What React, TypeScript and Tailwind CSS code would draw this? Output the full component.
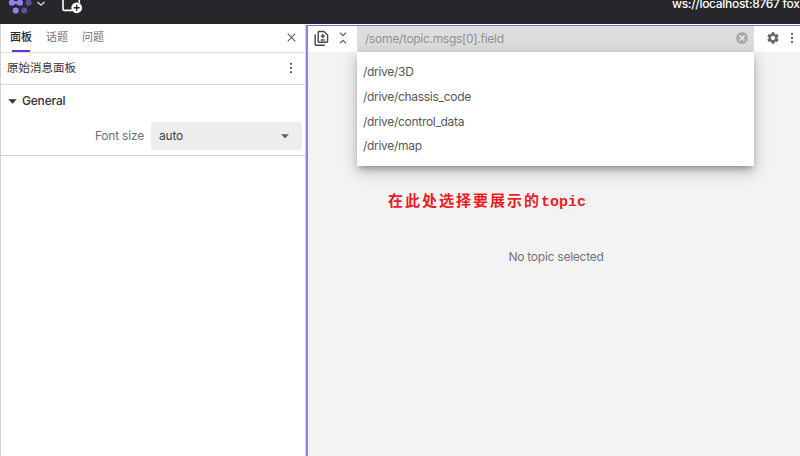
import React from "react";

const topics = ["/drive/3D", "/drive/chassis_code", "/drive/control_data", "/drive/map"];

function Dots() {
  return (
    <svg className="h-3 w-1 shrink-0" viewBox="0 0 4 12" fill="#5e5e63">
      <circle cx="2" cy="1.8" r="1.15" />
      <circle cx="2" cy="6" r="1.15" />
      <circle cx="2" cy="10.2" r="1.15" />
    </svg>
  );
}

function Header() {
  return (
    <header className="flex h-6 shrink-0 items-start bg-[#27272b] text-white">
      <svg className="h-6 w-[90px] shrink-0" viewBox="0 0 90 24" fill="none">
        <g fill="#9480f4">
          <rect x="11" y="1.2" width="10" height="3" />
          <circle cx="11.8" cy="2.7" r="3" />
          <circle cx="20" cy="2.7" r="3" />
          <circle cx="15.7" cy="10.4" r="3" />
        </g>
        <g fill="#5f4f9b">
          <circle cx="28.6" cy="2.7" r="3" />
          <circle cx="24.3" cy="10.4" r="3" />
        </g>
        <path d="M37.5 2 41 5.2 44.5 2" stroke="#d8d8dc" strokeWidth="1.3" />
        <path d="M63 0V9.2Q63 10.4 64.2 10.4H72M79.3 0V3" stroke="#fff" strokeWidth="1.6" />
        <circle cx="76.7" cy="7.8" r="5.4" fill="#fff" />
        <path d="M76.7 4.8v6M73.7 7.8h6" stroke="#27272b" strokeWidth="1.4" />
      </svg>
      <span className="-mt-[4px] ml-auto w-[128px] whitespace-nowrap text-[12px] leading-4 font-medium tracking-[-0.3px]">
        ws://localhost:8767 fox
      </span>
    </header>
  );
}

function Sidebar() {
  return (
    <aside className="flex w-[306px] shrink-0 flex-col border-x border-[#d4d4d8] bg-white">
      <nav className="flex h-[29px] shrink-0 items-stretch border-b border-[#dcdcdc] pr-[9px] pl-[9px] text-[11px] text-[#77737f]">
        <span className="relative flex w-9 items-center pb-px font-medium text-[#29292d]">
          面板
          <i className="absolute bottom-0 left-0.5 h-0.5 w-[18px] bg-[#6535d1]" />
        </span>
        <span className="flex w-9 items-center pb-px">话题</span>
        <span className="flex items-center pb-px">问题</span>
        <svg className="mt-[9px] ml-auto size-[9px]" viewBox="0 0 9 9" stroke="#626067" strokeWidth="1.15">
          <path d="m.7.7 7.6 7.6M8.3.7.7 8.3" />
        </svg>
      </nav>
      <div className="flex h-8 shrink-0 items-center justify-between border-b border-[#d8d8d8] pr-3 pl-[6px] text-[11.5px] text-[#36363a]">
        <span>原始消息面板</span>
        <span className="flex pb-px">
          <Dots />
        </span>
      </div>
      <section className="h-[71px] shrink-0 border-b border-[#d2d2d2]">
        <div className="flex h-8 items-center pl-[7px] text-[12px] font-medium tracking-[-0.2px] text-[#343438]">
          <svg className="mr-[5px] h-[5px] w-[9px]" viewBox="0 0 9 5" fill="#303034">
            <path d="M.3.3h8.4L4.5 4.7z" />
          </svg>
          General
        </div>
        <div className="mt-[5px] flex h-[28px] items-center justify-end pr-[3px] text-[12px] tracking-[-0.2px] text-[#716e7b]">
          <span className="mr-[7px] pb-px">Font size</span>
          <div className="flex h-full w-[151px] items-center justify-between rounded-[2px] bg-[#eeeeee] pr-[13px] pl-2 text-[#414146]">
            auto
            <svg className="h-[5px] w-2" viewBox="0 0 8 5" fill="#66666a">
              <path d="M0 .3h8L4 4.5z" />
            </svg>
          </div>
        </div>
      </section>
    </aside>
  );
}

function TopicInput() {
  return (
    <div className="relative flex h-full w-[397px] items-center justify-between bg-[#dddddd] pr-[6px] pl-2 text-[12px] tracking-[-0.3px] text-[#929292]">
      <span className="pb-px">/some/topic.msgs[0].field</span>
      <svg className="mb-0.5 size-3" viewBox="0 0 12 12">
        <circle cx="6" cy="6" r="6" fill="#aaaaaa" />
        <path d="m3.5 3.5 5 5m0-5-5 5" stroke="#eeeeee" strokeWidth="1.2" />
      </svg>
      <ul className="absolute top-full left-0 h-[114px] w-full bg-white pt-[8px] pl-[6px] text-[#57575a] shadow-[0_4px_6px_-2px_rgba(0,0,0,0.3),0_5px_14px_1px_rgba(0,0,0,0.22)]">
        {topics.map((t) => (
          <li key={t} className="flex h-[24.7px] items-center">{t}</li>
        ))}
      </ul>
    </div>
  );
}

function Panel() {
  return (
    <main className="mt-px flex min-w-0 flex-1 flex-col border-t border-l-2 border-t-[#8464d8] border-l-[#9b7bdd] bg-[#f3f3f3]">
      <div className="flex h-[26px] shrink-0 items-center bg-white">
        <svg className="mb-0.5 ml-1.5 h-[17px] w-[15px]" viewBox="0 0 15 17" fill="none" stroke="#444448" strokeWidth="1.4">
          <path d="M5.2 1.5h4.6L13.6 5v6.2q0 1-1 1H5.2q-1 0-1-1V2.5q0-1 1-1zM1.2 4.5v9.8q0 1 1 1h8.6M8.8 4.1v4M6.8 6.1h4M6.8 10h4" />
        </svg>
        <svg className="mb-0.5 ml-[10px] h-3 w-2" viewBox="0 0 8 12" fill="none" stroke="#626266" strokeWidth="1.2">
          <path d="M1 .8 4 3.7 7 .8M1 11.2l3-2.9 3 2.9" />
        </svg>
        <div className="ml-[10px] h-full">
          <TopicInput />
        </div>
        <svg className="mb-0.5 ml-[13px] size-3" viewBox="2.2 2 19.6 20" fill="#65656a">
          <path d="M19.14 12.94c.04-.3.06-.61.06-.94s-.02-.64-.07-.94l2.03-1.58a.49.49 0 0 0 .12-.61l-1.92-3.32a.49.49 0 0 0-.59-.22l-2.39.96a7 7 0 0 0-1.62-.94l-.36-2.54a.48.48 0 0 0-.48-.41h-3.84a.47.47 0 0 0-.47.41l-.36 2.54c-.59.24-1.13.57-1.62.94l-2.39-.96a.47.47 0 0 0-.59.22L2.74 8.87a.47.47 0 0 0 .12.61l2.03 1.58a6 6 0 0 0-.02 1.88l-2.03 1.58a.49.49 0 0 0-.12.61l1.92 3.32c.12.22.37.29.59.22l2.39-.96c.5.38 1.03.7 1.62.94l.36 2.54c.05.24.24.41.48.41h3.84c.24 0 .44-.17.47-.41l.36-2.54a7 7 0 0 0 1.62-.94l2.39.96c.22.08.47 0 .59-.22l1.92-3.32a.47.47 0 0 0-.12-.61zM12 15.6a3.6 3.6 0 1 1 0-7.2 3.6 3.6 0 0 1 0 7.2" />
        </svg>
        <span className="mb-0.5 ml-[11px] flex">
          <Dots />
        </span>
      </div>
      <p className="mt-[139px] ml-[80px] text-[15px] leading-5 font-bold tracking-[2px] whitespace-nowrap text-[#ed1c24]">
        在此处选择要展示的<span className="font-['Liberation_Mono','Courier_New',monospace] tracking-[0px]">topic</span>
      </p>
      <p className="mt-[34px] pl-[4px] text-center text-[12px] leading-5 tracking-[-0.25px] text-[#74727e]">No topic selected</p>
    </main>
  );
}

export default function App() {
  return (
    <div className="flex h-[456px] w-[800px] flex-col overflow-hidden bg-white font-['Inter','Noto_Sans_CJK_SC',sans-serif]">
      <Header />
      <div className="flex min-h-0 flex-1">
        <Sidebar />
        <Panel />
      </div>
    </div>
  );
}
